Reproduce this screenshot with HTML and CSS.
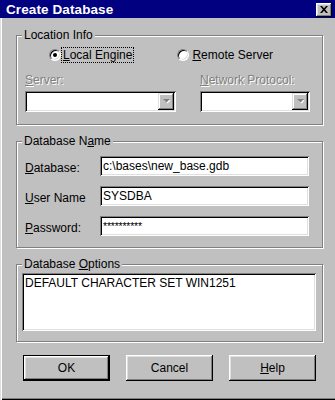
FILE: index.html
```html
<!DOCTYPE html>
<html>
<head>
<meta charset="utf-8">
<title>Create Database</title>
<link rel="stylesheet" href="styles.css">
</head>
<body>
<div class="window">
  <div class="titlebar">
    <span class="title">Create Database</span>
    <span class="close-btn">
      <svg width="8" height="7" viewBox="0 0 8 7"><path d="M0 0H2L4 2.2L6 0H8L5.1 3.5L8 7H6L4 4.8L2 7H0L2.9 3.5Z" fill="#000"/></svg>
    </span>
  </div>
  <div class="client">
    <div class="group">
      <div class="group-title">Location Info</div>
      <div class="radio-row">
        <label class="option">
          <span class="radio checked"></span>
          <span class="option-text focus"><u>L</u>ocal Engine</span>
        </label>
        <label class="option option-remote">
          <span class="radio"></span>
          <span class="option-text"><u>R</u>emote Server</span>
        </label>
      </div>
      <div class="combo-row">
        <div class="combo-col combo-server">
          <div class="field-label disabled"><u>S</u>erver:</div>
          <div class="combo">
            <span class="combo-btn"><svg width="7" height="5" viewBox="0 0 7 5"><path d="M1 1H8L4.5 4.5Z" fill="#fff"/><path d="M0 0H7L3.5 3.5Z" fill="#808080"/></svg></span>
          </div>
        </div>
        <div class="combo-col combo-protocol">
          <div class="field-label disabled"><u>N</u>etwork Protocol:</div>
          <div class="combo">
            <span class="combo-btn"><svg width="7" height="5" viewBox="0 0 7 5"><path d="M1 1H8L4.5 4.5Z" fill="#fff"/><path d="M0 0H7L3.5 3.5Z" fill="#808080"/></svg></span>
          </div>
        </div>
      </div>
    </div>

    <div class="group group-name">
      <div class="group-title">Database N<u>a</u>me</div>
      <div class="form-row">
        <span class="row-label"><u>D</u>atabase:</span>
        <div class="field">c:\bases\new_base.gdb</div>
      </div>
      <div class="form-row">
        <span class="row-label"><u>U</u>ser Name</span>
        <div class="field">SYSDBA</div>
      </div>
      <div class="form-row">
        <span class="row-label"><u>P</u>assword:</span>
        <div class="field field-password">**********</div>
      </div>
    </div>

    <div class="group group-options">
      <div class="group-title">Database <u>O</u>ptions</div>
      <div class="memo">DEFAULT CHARACTER SET WIN1251</div>
    </div>

    <div class="button-row">
      <button class="btn btn-default">OK</button>
      <button class="btn">Cancel</button>
      <button class="btn"><u>H</u>elp</button>
    </div>
  </div>
</div>
</body>
</html>
```

FILE: styles.css
```css
html, body {
  margin: 0;
  padding: 0;
  background: #c0c0c0;
}

body {
  font-family: "Liberation Sans", Arial, sans-serif;
  font-size: 12px;
  color: #000;
}

.window {
  width: 335px;
  height: 400px;
  display: flex;
  flex-direction: column;
  background: #c0c0c0;
  overflow: hidden;
}

.titlebar {
  height: 18px;
  box-sizing: border-box;
  padding: 1px 3px 0 6px;
  background: #000080;
  display: flex;
  align-items: center;
  justify-content: space-between;
  flex: none;
}

.title {
  color: #fff;
  font-weight: bold;
  font-size: 13.5px;
  line-height: 16px;
  letter-spacing: 0.1px;
}

.close-btn {
  width: 16px;
  height: 14px;
  box-sizing: border-box;
  background: #c0c0c0;
  box-shadow: inset -1px -1px #000, inset 1px 1px #fff, inset -2px -2px #808080, inset 2px 2px #dfdfdf;
  display: flex;
  align-items: center;
  justify-content: center;
  padding: 0 1px 1px 0;
}

.close-btn svg {
  display: block;
}

.client {
  flex: 1;
  padding: 0 12px 0 16px;
  box-shadow: inset 1px 0 #dfdfdf, inset 2px 0 #fff, inset 0 -1px #000, inset 0 -2px #808080;
}

.group {
  margin-top: 16px;
  border: 1px solid #808080;
  box-shadow: inset 1px 1px #fff, 1px 1px #fff;
  padding: 0 0 12px 0;
}

.group:first-child {
  margin-top: 17px;
}

.group-title {
  width: fit-content;
  margin: -8px 0 0 5px;
  padding: 0 2px;
  height: 14px;
  line-height: 14px;
  background: #c0c0c0;
}

u {
  text-decoration: underline;
  text-underline-offset: 1px;
}

/* Location info */
.radio-row {
  margin-top: 5px;
  height: 16px;
  padding-left: 32px;
  display: flex;
  align-items: center;
}

.option {
  display: flex;
  align-items: center;
}

.option-remote {
  margin-left: 44px;
}

.radio {
  width: 12px;
  height: 12px;
  box-sizing: border-box;
  border-radius: 50%;
  background: #fff;
  border: 1px solid;
  border-color: #808080 #fff #fff #808080;
  box-shadow: inset 1px 1px #000, inset -1px -1px #dfdfdf;
  display: flex;
  align-items: center;
  justify-content: center;
  flex: none;
}

.radio.checked::after {
  content: "";
  width: 4px;
  height: 4px;
  border-radius: 50%;
  background: #000;
}

.option-text {
  margin-left: 1px;
  padding: 0 1px;
  line-height: 14px;
}

.option-remote .option-text {
  margin-left: 2px;
}

.focus {
  outline: 1px dotted #000;
}

.combo-row {
  display: flex;
  gap: 24px;
  padding-left: 8px;
  margin-top: 10px;
}

.combo-server {
  width: 151px;
}

.combo-protocol {
  width: 110px;
}

.field-label {
  height: 14px;
  line-height: 14px;
  white-space: nowrap;
}

.disabled {
  color: #808080;
  text-shadow: 1px 1px #fff;
}

.combo {
  margin-top: 4px;
  height: 21px;
  box-sizing: border-box;
  padding: 2px;
  background: #fff;
  box-shadow: inset 1px 1px #808080, inset -1px -1px #fff, inset 2px 2px #000, inset -2px -2px #dfdfdf;
  display: flex;
  justify-content: flex-end;
}

.combo-btn {
  width: 16px;
  height: 17px;
  box-sizing: border-box;
  background: #c0c0c0;
  box-shadow: inset -1px -1px #000, inset 1px 1px #dfdfdf, inset -2px -2px #808080, inset 2px 2px #fff;
  display: flex;
  align-items: center;
  justify-content: center;
}

.combo-btn svg {
  display: block;
}

/* Database name */
.group-name {
  padding-bottom: 11px;
}

.form-row {
  display: flex;
  align-items: center;
  margin-top: 10px;
  padding-left: 8px;
}

.group-title + .form-row {
  margin-top: 8px;
}

.row-label {
  width: 75px;
  line-height: 14px;
  padding-top: 3px;
}

.field {
  width: 209px;
  height: 20px;
  box-sizing: border-box;
  padding: 0 3px;
  line-height: 20px;
  background: #fff;
  box-shadow: inset 1px 1px #808080, inset -1px -1px #fff, inset 2px 2px #000, inset -2px -2px #dfdfdf;
  white-space: nowrap;
}

.field-password {
  font-size: 10.5px;
  letter-spacing: -0.2px;
}

/* Options */
.group-options {
  padding-bottom: 10px;
}

.memo {
  margin: 2px 0 0 5px;
  width: 294px;
  height: 58px;
  box-sizing: border-box;
  padding: 3px 3px;
  line-height: 14px;
  background: #fff;
  box-shadow: inset 1px 1px #808080, inset -1px -1px #fff, inset 2px 2px #000, inset -2px -2px #dfdfdf;
}

/* Buttons */
.button-row {
  margin-top: 13px;
  padding-left: 7px;
  display: flex;
  gap: 16px;
}

.btn {
  width: 87px;
  height: 26px;
  box-sizing: border-box;
  margin: 0;
  padding: 0;
  border: none;
  background: #c0c0c0;
  font-family: "Liberation Sans", Arial, sans-serif;
  font-size: 12px;
  color: #000;
  box-shadow: inset -1px -1px #000, inset 1px 1px #fff, inset -2px -2px #808080, inset 2px 2px #dfdfdf;
}

.btn-default {
  border: 1px solid #000;
}
```
